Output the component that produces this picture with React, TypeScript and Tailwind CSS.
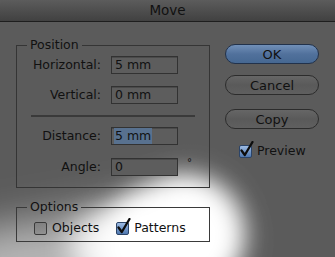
import React from "react";

const Field = ({
  label,
  value,
  selected,
  className = "",
  suffix,
}: {
  label: string;
  value: string;
  selected?: boolean;
  className?: string;
  suffix?: string;
}) => (
  <div className={"flex h-[18px] items-center " + className}>
    <span className="w-[84px] text-right">{label}</span>
    <div className="ml-[10px] flex h-[18px] w-[67px] items-center border border-[#323232] bg-[#5d5d5d] pl-[2px] shadow-[inset_0_1px_0_#4a4a4a]">
      <span className={selected ? "bg-[#58718f] px-[1px] leading-[16px]" : "px-[1px] leading-[16px]"}>
        {value}
      </span>
    </div>
    {suffix && <span className="ml-[9px] self-start text-[10px] leading-[10px]">{suffix}</span>}
  </div>
);

const Check = ({ checked, className = "" }: { checked?: boolean; className?: string }) => (
  <div className={"relative h-[13px] w-[13px] shrink-0 " + className}>
    {checked ? (
      <div className="h-full w-full rounded-[2px] border border-[#2b4468] bg-linear-to-b from-[#9dbbe3] to-[#4f78b0]" />
    ) : (
      <div className="h-full w-full rounded-[2px] border border-[#3a3a3a] bg-linear-to-b from-[#6e6e6e]/40 to-[#5a5a5a]/20" />
    )}
    {checked && (
      <svg className="absolute -top-[4px] left-[1px]" width="14" height="16" viewBox="0 0 14 16">
        <path d="M1.5 9.5 L4.8 14 L12.5 1" fill="none" stroke="#0d0d0d" strokeWidth="2.3" strokeLinecap="round" strokeLinejoin="round" />
      </svg>
    )}
  </div>
);

const Button = ({ children, primary, className = "" }: { children: React.ReactNode; primary?: boolean; className?: string }) => (
  <div
    className={
      "flex h-[20px] w-[94px] items-center justify-center rounded-full border text-[13px] leading-none " +
      (primary
        ? "border-[#22324b] bg-linear-to-b from-[#7190b8] via-[#51719c] to-[#466892] "
        : "border-[#2c2c2c] bg-linear-to-b from-[#666666] via-[#5a5a5a] to-[#5f5f5f] ") +
      className
    }
  >
    {children}
  </div>
);

export default function App() {
  return (
    <div className="relative h-[257px] w-[335px] overflow-hidden bg-[#5b5b5b] font-['DejaVu_Sans',sans-serif] text-[12.5px] text-[#111]">
      {/* spotlight glow */}
      <div className="absolute left-[-50px] top-[212px] h-[80px] w-[280px] -rotate-[10deg] rounded-full bg-white/55 blur-[20px]" />
      <div className="absolute left-[100px] top-[180px] h-[120px] w-[145px] -rotate-[25deg] rounded-full bg-white blur-[12px]" />
      <div className="absolute left-[70px] top-[212px] h-[70px] w-[130px] rounded-full bg-white/85 blur-[14px]" />

      <div className="relative h-[22px] rounded-t-[4px] border-b border-[#1e1e1e] bg-linear-to-b from-[#5c5c5c] to-[#414141] text-center text-[13.5px] leading-[21px]">
        Move
      </div>

      <div className="relative flex pl-4 pt-[15px]">
        <div className="w-[194px]">
          <fieldset className="border border-[#353535] pb-[11px] pt-[3px]">
            <legend className="ml-[10px] px-[3px] leading-[16px]">Position</legend>
            <Field label="Horizontal:" value="5 mm" />
            <Field label="Vertical:" value="0 mm" className="mt-[12px]" />
            <div className="mx-[14px] mt-[11px] h-[2px] bg-[#3a3a3a]" />
            <Field label="Distance:" value="5 mm" selected className="mt-[10px]" />
            <Field label="Angle:" value="0" suffix="°" className="mt-[13px]" />
          </fieldset>

          <fieldset className="mt-[11px] border border-[#3a3a3a] pb-[6px] pl-[17px] pt-[7px]">
            <legend className="ml-[-7px] px-[3px] leading-[16px]">Options</legend>
            <div className="flex h-[13px] items-center">
              <Check />
              <span className="ml-[5px]">Objects</span>
              <Check checked className="ml-[17px]" />
              <span className="ml-[5px]">Patterns</span>
            </div>
          </fieldset>
        </div>

        <div className="ml-[15px] flex flex-col pt-[7px]">
          <Button primary>OK</Button>
          <Button className="mt-[11px]">Cancel</Button>
          <Button className="mt-[14px]">Copy</Button>
          <div className="ml-[14px] mt-[16px] flex h-[13px] items-center">
            <Check checked />
            <span className="ml-[5px]">Preview</span>
          </div>
        </div>
      </div>
    </div>
  );
}
